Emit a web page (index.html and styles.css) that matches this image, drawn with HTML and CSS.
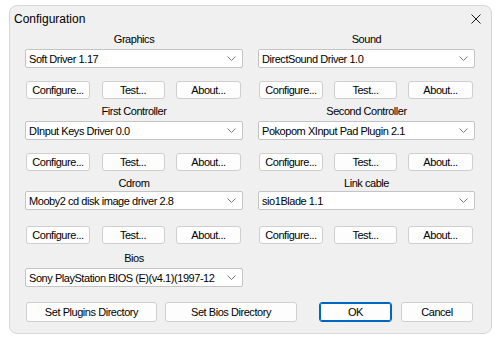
FILE: index.html
```html
<!DOCTYPE html>
<html>
<head>
<meta charset="utf-8">
<link rel="stylesheet" href="styles.css">
</head>
<body>
<div class="window">
  <div class="titlebar">
    <span class="title">Configuration</span>
    <svg class="close" width="10" height="10" viewBox="0 0 10 10"><path d="M0.5 0.5L9.5 9.5M9.5 0.5L0.5 9.5" stroke="#1a1a1a" stroke-width="1"/></svg>
  </div>
  <div class="content">
    <div class="grid">
      <div class="section">
        <div class="label">Graphics</div>
        <div class="combo"><span>Soft Driver 1.17</span><svg class="chev" width="9" height="5" viewBox="0 0 9 5"><path d="M0.5 0.5L4.5 4.5L8.5 0.5" fill="none" stroke="#777" stroke-width="1"/></svg></div>
        <div class="btns"><button class="btn w-cfg">Configure...</button><button class="btn w-test">Test...</button><button class="btn w-about">About...</button></div>
      </div>
      <div class="section">
        <div class="label">Sound</div>
        <div class="combo"><span>DirectSound Driver 1.0</span><svg class="chev" width="9" height="5" viewBox="0 0 9 5"><path d="M0.5 0.5L4.5 4.5L8.5 0.5" fill="none" stroke="#777" stroke-width="1"/></svg></div>
        <div class="btns"><button class="btn w-cfg">Configure...</button><button class="btn w-test">Test...</button><button class="btn w-about">About...</button></div>
      </div>
      <div class="section">
        <div class="label">First Controller</div>
        <div class="combo"><span>DInput Keys Driver 0.0</span><svg class="chev" width="9" height="5" viewBox="0 0 9 5"><path d="M0.5 0.5L4.5 4.5L8.5 0.5" fill="none" stroke="#777" stroke-width="1"/></svg></div>
        <div class="btns"><button class="btn w-cfg">Configure...</button><button class="btn w-test">Test...</button><button class="btn w-about">About...</button></div>
      </div>
      <div class="section">
        <div class="label">Second Controller</div>
        <div class="combo"><span>Pokopom XInput Pad Plugin 2.1</span><svg class="chev" width="9" height="5" viewBox="0 0 9 5"><path d="M0.5 0.5L4.5 4.5L8.5 0.5" fill="none" stroke="#777" stroke-width="1"/></svg></div>
        <div class="btns"><button class="btn w-cfg">Configure...</button><button class="btn w-test">Test...</button><button class="btn w-about">About...</button></div>
      </div>
      <div class="section tight">
        <div class="label">Cdrom</div>
        <div class="combo"><span>Mooby2 cd disk image driver 2.8</span><svg class="chev" width="9" height="5" viewBox="0 0 9 5"><path d="M0.5 0.5L4.5 4.5L8.5 0.5" fill="none" stroke="#777" stroke-width="1"/></svg></div>
        <div class="btns"><button class="btn w-cfg">Configure...</button><button class="btn w-test">Test...</button><button class="btn w-about">About...</button></div>
      </div>
      <div class="section tight">
        <div class="label">Link cable</div>
        <div class="combo"><span>sio1Blade 1.1</span><svg class="chev" width="9" height="5" viewBox="0 0 9 5"><path d="M0.5 0.5L4.5 4.5L8.5 0.5" fill="none" stroke="#777" stroke-width="1"/></svg></div>
        <div class="btns"><button class="btn w-cfg">Configure...</button><button class="btn w-test">Test...</button><button class="btn w-about">About...</button></div>
      </div>
      <div class="section bios">
        <div class="label">Bios</div>
        <div class="combo"><span>Sony PlayStation BIOS (E)(v4.1)(1997-12</span><svg class="chev" width="9" height="5" viewBox="0 0 9 5"><path d="M0.5 0.5L4.5 4.5L8.5 0.5" fill="none" stroke="#777" stroke-width="1"/></svg></div>
      </div>
    </div>
    <div class="footer">
      <button class="btn w-plug">Set Plugins Directory</button>
      <button class="btn w-bios">Set Bios Directory</button>
      <button class="btn w-ok default">OK</button>
      <button class="btn w-cancel">Cancel</button>
    </div>
  </div>
</div>
</body>
</html>
```
FILE: styles.css
```css
html, body {
  margin: 0;
  padding: 0;
  background: #ffffff;
}
body {
  padding: 5px 0 0 9px;
  font-family: "Liberation Sans", Arial, sans-serif;
  font-size: 11px;
  letter-spacing: -0.45px;
  color: #000;
}
.window {
  width: 483px;
  height: 329px;
  box-sizing: border-box;
  background: #f0f0f0;
  border: 1px solid #d6d6d6;
  border-radius: 8px;
}
.titlebar {
  height: 25px;
  display: flex;
  align-items: center;
  justify-content: space-between;
  padding: 0 10px 0 4px;
}
.title {
  font-size: 12px;
  letter-spacing: 0;
  color: #000;
}
.close {
  display: block;
}
.content {
  padding: 1px 16px 0 15px;
}
.grid {
  display: grid;
  grid-template-columns: 218px 217px;
  column-gap: 15px;
  row-gap: 5px;
}
.section {
  display: flex;
  flex-direction: column;
}
.label {
  height: 14px;
  line-height: 14px;
  text-align: center;
}
.combo {
  margin-top: 3px;
  height: 19px;
  box-sizing: border-box;
  background: #ffffff;
  border: 1px solid #c4c4c4;
  border-radius: 2px;
  display: flex;
  align-items: center;
  justify-content: space-between;
  padding: 0 6px 0 3px;
  white-space: nowrap;
  overflow: hidden;
}
.chev {
  flex: none;
  display: block;
}
.btns {
  margin-top: 13px;
  display: flex;
  justify-content: space-between;
  padding: 0 2px 0 1px;
}
.section.tight .combo {
  margin-top: 1px;
}
.section.tight .btns {
  margin-top: 16px;
}
.section.bios {
  margin-top: 2px;
}
.btn {
  height: 18px;
  box-sizing: border-box;
  padding: 0;
  margin: 0;
  font-family: "Liberation Sans", Arial, sans-serif;
  font-size: 11px;
  letter-spacing: -0.45px;
  color: #000;
  background: #fdfdfd;
  border: 1px solid #cfcfcf;
  border-radius: 3px;
}
.w-cfg { width: 64px; }
.w-test { width: 63px; }
.w-about { width: 65px; }
.footer {
  margin-top: 15px;
  display: flex;
  padding-left: 1px;
}
.footer .btn {
  height: 20px;
}
.w-plug { width: 131px; }
.w-bios { width: 132px; margin-left: 8px; }
.w-ok { width: 73px; margin-left: 22px; }
.w-cancel { width: 72px; margin-left: 9px; }
.btn.default {
  border: 1px solid #0067c0;
  box-shadow: inset 0 0 0 1px #0067c0;
}
```
